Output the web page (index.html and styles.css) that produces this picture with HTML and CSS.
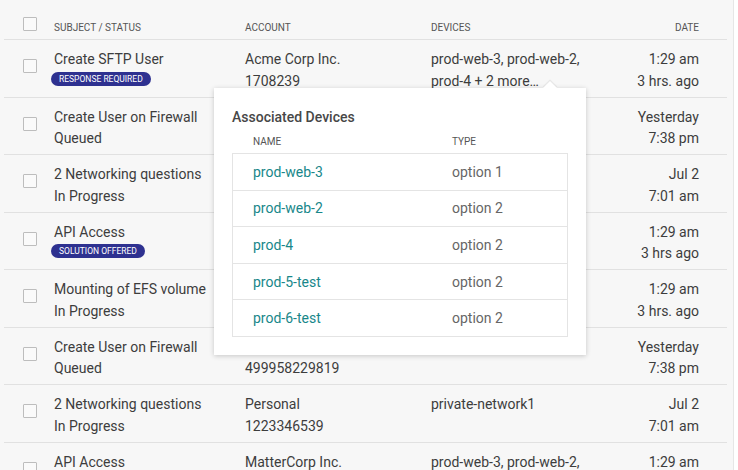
FILE: index.html
```html
<!DOCTYPE html>
<html>
<head>
<meta charset="utf-8">
<link rel="stylesheet" href="styles.css">
</head>
<body>
<div class="app">
  <div class="main">
    <div class="table">
      <div class="row head">
        <div class="cell"><span class="cb"></span></div>
        <div class="cell">Subject / Status</div>
        <div class="cell">Account</div>
        <div class="cell">Devices</div>
        <div class="cell date">Date</div>
      </div>
      <div class="row">
        <div class="cell"><span class="cb"></span></div>
        <div class="cell"><div>Create SFTP User</div><span class="badge">Response Required</span></div>
        <div class="cell"><div>Acme Corp Inc.</div><div>1708239</div></div>
        <div class="cell"><div>prod-web-3, prod-web-2,</div><div>prod-4 + 2 more…</div></div>
        <div class="cell date"><div>1:29 am</div><div>3 hrs. ago</div></div>
      </div>
      <div class="row">
        <div class="cell"><span class="cb"></span></div>
        <div class="cell"><div>Create User on Firewall</div><div>Queued</div></div>
        <div class="cell"><div>Acme Corp Inc.</div><div>499958229819</div></div>
        <div class="cell"><div>prod-web-1</div></div>
        <div class="cell date"><div>Yesterday</div><div>7:38 pm</div></div>
      </div>
      <div class="row">
        <div class="cell"><span class="cb"></span></div>
        <div class="cell"><div>2 Networking questions</div><div>In Progress</div></div>
        <div class="cell"><div>Personal</div><div>1223346539</div></div>
        <div class="cell"><div>private-network1</div></div>
        <div class="cell date"><div>Jul 2</div><div>7:01 am</div></div>
      </div>
      <div class="row">
        <div class="cell"><span class="cb"></span></div>
        <div class="cell"><div>API Access</div><span class="badge">Solution Offered</span></div>
        <div class="cell"><div>MatterCorp Inc.</div><div>1708239</div></div>
        <div class="cell"><div>prod-web-3</div></div>
        <div class="cell date"><div>1:29 am</div><div>3 hrs ago</div></div>
      </div>
      <div class="row">
        <div class="cell"><span class="cb"></span></div>
        <div class="cell"><div>Mounting of EFS volume</div><div>In Progress</div></div>
        <div class="cell"><div>Acme Corp Inc.</div><div>1708239</div></div>
        <div class="cell"><div>prod-4</div></div>
        <div class="cell date"><div>1:29 am</div><div>3 hrs. ago</div></div>
      </div>
      <div class="row">
        <div class="cell"><span class="cb"></span></div>
        <div class="cell"><div>Create User on Firewall</div><div>Queued</div></div>
        <div class="cell"><div>Acme Corp Inc.</div><div>499958229819</div></div>
        <div class="cell"><div>prod-web-1</div></div>
        <div class="cell date"><div>Yesterday</div><div>7:38 pm</div></div>
      </div>
      <div class="row">
        <div class="cell"><span class="cb"></span></div>
        <div class="cell"><div>2 Networking questions</div><div>In Progress</div></div>
        <div class="cell"><div>Personal</div><div>1223346539</div></div>
        <div class="cell"><div>private-network1</div></div>
        <div class="cell date"><div>Jul 2</div><div>7:01 am</div></div>
      </div>
      <div class="row">
        <div class="cell"><span class="cb"></span></div>
        <div class="cell"><div>API Access</div></div>
        <div class="cell"><div>MatterCorp Inc.</div></div>
        <div class="cell"><div>prod-web-3, prod-web-2,</div></div>
        <div class="cell date"><div>1:29 am</div></div>
      </div>
    </div>

    <div class="popover">
      <div class="pop-title">Associated Devices</div>
      <div class="dev-head">
        <div>Name</div>
        <div>Type</div>
      </div>
      <div class="dev-table">
        <div class="dev-row"><div class="dev-name">prod-web-3</div><div class="dev-type">option 1</div></div>
        <div class="dev-row"><div class="dev-name">prod-web-2</div><div class="dev-type">option 2</div></div>
        <div class="dev-row"><div class="dev-name">prod-4</div><div class="dev-type">option 2</div></div>
        <div class="dev-row"><div class="dev-name">prod-5-test</div><div class="dev-type">option 2</div></div>
        <div class="dev-row"><div class="dev-name">prod-6-test</div><div class="dev-type">option 2</div></div>
      </div>
    </div>
  </div>
  <div class="side"></div>
</div>
</body>
</html>
```

FILE: styles.css
```css
html, body {
  margin: 0;
  height: 470px;
  overflow: hidden;
}
body {
  font-family: Roboto, "Liberation Sans", sans-serif;
  background: #fff;
}
.app {
  display: flex;
  height: 470px;
}
.main {
  position: relative;
  width: 733px;
  border-right: 1px solid #e6e6e6;
  background: #f7f7f7;
}
.side {
  flex: 1;
  background: #fff;
}
.table {
  margin-left: 4px;
  width: 723px;
}
.row {
  display: grid;
  grid-template-columns: 50px 191px 186px 1fr auto;
  padding-right: 28px;
  box-sizing: border-box;
  height: 57.5px;
  padding-top: 9px;
  border-bottom: 1px solid #e1e1e1;
  font-size: 14px;
  line-height: 21.5px;
  color: #3d3d3d;
}
.row.head {
  height: 40px;
  padding-top: 21px;
  font-size: 10px;
  line-height: 13px;
  text-transform: uppercase;
  color: #555;
}
.cell {
  white-space: nowrap;
}
.date {
  text-align: right;
}
.cb {
  display: block;
  width: 14px;
  height: 14px;
  box-sizing: border-box;
  border: 1px solid #bdbdbd;
  border-radius: 1px;
  background: #fafafa;
  margin-left: 19px;
  margin-top: 10px;
}
.head .cb {
  margin-top: -4px;
}
.badge {
  display: inline-block;
  height: 14px;
  line-height: 14px;
  padding: 0 8px;
  margin-top: 1px;
  margin-left: -3px;
  border-radius: 7px;
  background: #2e3190;
  color: #fff;
  font-size: 8.5px;
  text-transform: uppercase;
  vertical-align: top;
}
.popover {
  position: absolute;
  left: 214px;
  top: 88px;
  width: 372px;
  box-sizing: border-box;
  padding: 19px 18px 18px;
  background: #fff;
  box-shadow: 0 1px 5px rgba(0, 0, 0, 0.2);
}
.popover::before {
  content: "";
  position: absolute;
  left: 331px;
  top: -5px;
  width: 10px;
  height: 10px;
  background: #fff;
  transform: rotate(45deg);
  box-shadow: -1px -1px 1px rgba(0, 0, 0, 0.08);
}
.pop-title {
  font-size: 14px;
  line-height: 20px;
  font-weight: 500;
  color: #474747;
}
.dev-head {
  display: grid;
  grid-template-columns: 199px 1fr;
  padding-left: 21px;
  margin-top: 8px;
  margin-bottom: 4px;
  font-size: 10px;
  line-height: 14px;
  text-transform: uppercase;
  color: #555;
}
.dev-table {
  border: 1px solid #e4e4e4;
}
.dev-row {
  display: grid;
  grid-template-columns: 199px 1fr;
  align-items: center;
  height: 35.6px;
  padding-left: 20px;
  font-size: 14px;
  border-bottom: 1px solid #e4e4e4;
}
.dev-row:last-child {
  border-bottom: none;
}
.dev-name {
  color: #18878a;
}
.dev-type {
  color: #666;
}
```
